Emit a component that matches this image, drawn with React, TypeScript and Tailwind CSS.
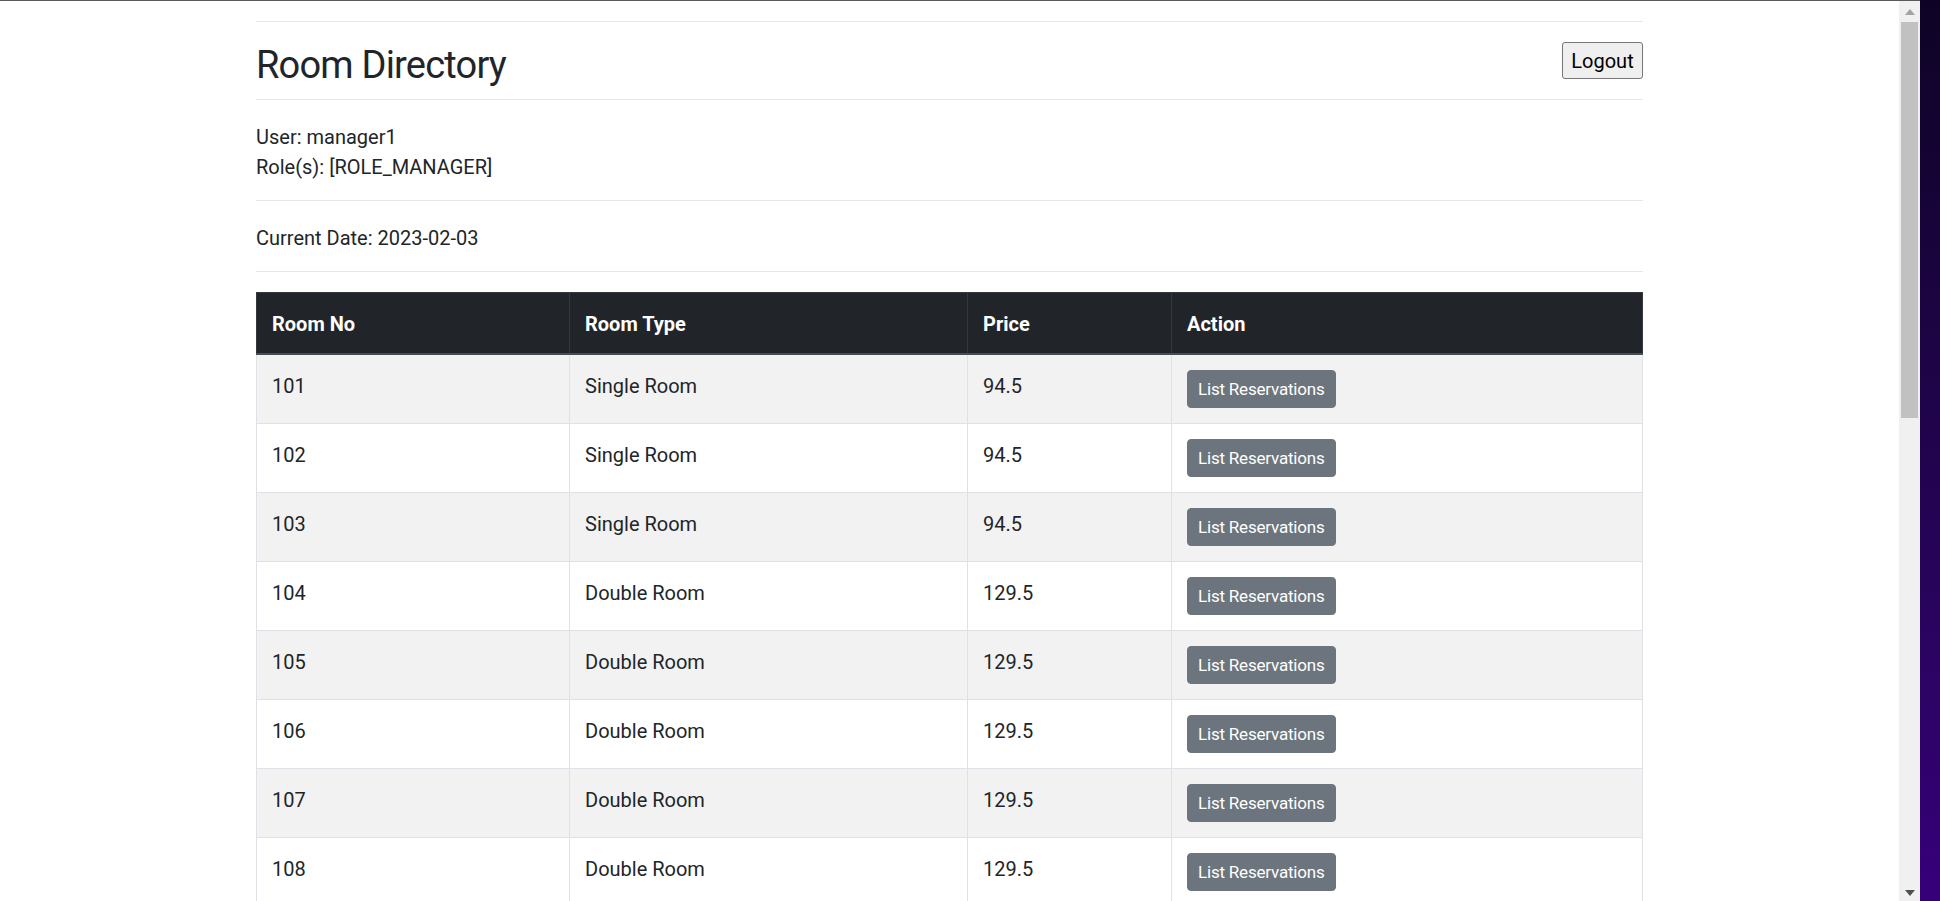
import React from 'react'

type Room = { no: number; type: string; price: string }

const rooms: Room[] = [
  { no: 101, type: 'Single Room', price: '94.5' },
  { no: 102, type: 'Single Room', price: '94.5' },
  { no: 103, type: 'Single Room', price: '94.5' },
  { no: 104, type: 'Double Room', price: '129.5' },
  { no: 105, type: 'Double Room', price: '129.5' },
  { no: 106, type: 'Double Room', price: '129.5' },
  { no: 107, type: 'Double Room', price: '129.5' },
  { no: 108, type: 'Double Room', price: '129.5' },
]

function Rule() {
  return <div className="h-px bg-[#e6e6e6]" />
}

function Scrollbar() {
  return (
    <div className="flex w-[21px] flex-col bg-[#f0f0f0]">
      <div className="flex h-[21px] items-center justify-center">
        <svg width="10" height="6" viewBox="0 0 10 6">
          <path d="M5 0 L10 6 L0 6 Z" fill="#a3a3a3" />
        </svg>
      </div>
      <div className="mx-[2px] h-[396px] bg-[#c1c1c1]" />
      <div className="flex-1" />
      <div className="flex h-[21px] items-center justify-center pt-[4px]">
        <svg width="10" height="6" viewBox="0 0 10 6">
          <path d="M0 0 L10 0 L5 6 Z" fill="#505050" />
        </svg>
      </div>
    </div>
  )
}

export default function App() {
  return (
    <div className="flex h-[901px] overflow-hidden bg-white font-['Roboto','Liberation_Sans',sans-serif] text-[#212529]">
      <div className="flex min-w-0 flex-1 flex-col">
        <div className="h-px bg-[#5a5a5a]" />
        <div className="flex min-h-0 flex-1">
          <main className="min-w-0 flex-1 overflow-hidden">
            <div className="mx-auto w-[1387px] pt-[20px]">
              <Rule />

              {/* Header */}
              <div className="flex h-[77px] items-start justify-between">
                <h2 className="mt-[19px] text-[38px] leading-[48px] font-normal tracking-[-0.8px]">Room Directory</h2>
                <button className="mt-[20px] h-[37px] w-[81px] rounded-[3px] border border-[#767676] bg-[#efefef] text-[20px] leading-[30px] text-black">
                  Logout
                </button>
              </div>
              <Rule />

              <div className="pt-[22px] pb-[18px] text-[20px] leading-[30px]">
                <div>User: manager1</div>
                <div>Role(s): [ROLE_MANAGER]</div>
              </div>
              <Rule />

              <div className="pt-[22px] pb-[18px] text-[20px] leading-[30px]">
                Current Date: 2023-02-03
              </div>
              <Rule />

              {/* Rooms table */}
              <table className="mt-[20px] w-full table-fixed border-collapse text-left text-[20px] leading-[30px]">
                <colgroup>
                  <col className="w-[313px]" />
                  <col className="w-[398px]" />
                  <col className="w-[204px]" />
                  <col />
                </colgroup>
                <thead>
                  <tr className="bg-[#212529] text-white">
                    <th className="border border-[#32383e] border-b-2 border-b-[#454d55] px-[15px] pt-[16px] pb-[14px] font-bold">Room No</th>
                    <th className="border border-[#32383e] border-b-2 border-b-[#454d55] px-[15px] pt-[16px] pb-[14px] font-bold">Room Type</th>
                    <th className="border border-[#32383e] border-b-2 border-b-[#454d55] px-[15px] pt-[16px] pb-[14px] font-bold">Price</th>
                    <th className="border border-[#32383e] border-b-2 border-b-[#454d55] px-[15px] pt-[16px] pb-[14px] font-bold">Action</th>
                  </tr>
                </thead>
                <tbody>
                  {rooms.map((r, i) => (
                    <tr key={r.no} className={i % 2 === 0 ? 'bg-[#f2f2f2]' : 'bg-white'}>
                      <td className="border border-[#dee2e6] p-[15px] align-top leading-[32px]">{r.no}</td>
                      <td className="border border-[#dee2e6] p-[15px] align-top leading-[32px]">{r.type}</td>
                      <td className="border border-[#dee2e6] p-[15px] align-top leading-[32px]">{r.price}</td>
                      <td className="border border-[#dee2e6] p-[15px] align-top">
                        <button className="block h-[38px] rounded-[4px] border border-[#6c757d] bg-[#6c757d] px-[10px] text-[17px] leading-[26px] tracking-[-0.2px] text-white">
                          List Reservations
                        </button>
                      </td>
                    </tr>
                  ))}
                </tbody>
              </table>
            </div>
          </main>
          <Scrollbar />
        </div>
      </div>
      <div className="w-[20px] bg-linear-to-b from-[#0e0326] to-[#37007a]" />
    </div>
  )
}
